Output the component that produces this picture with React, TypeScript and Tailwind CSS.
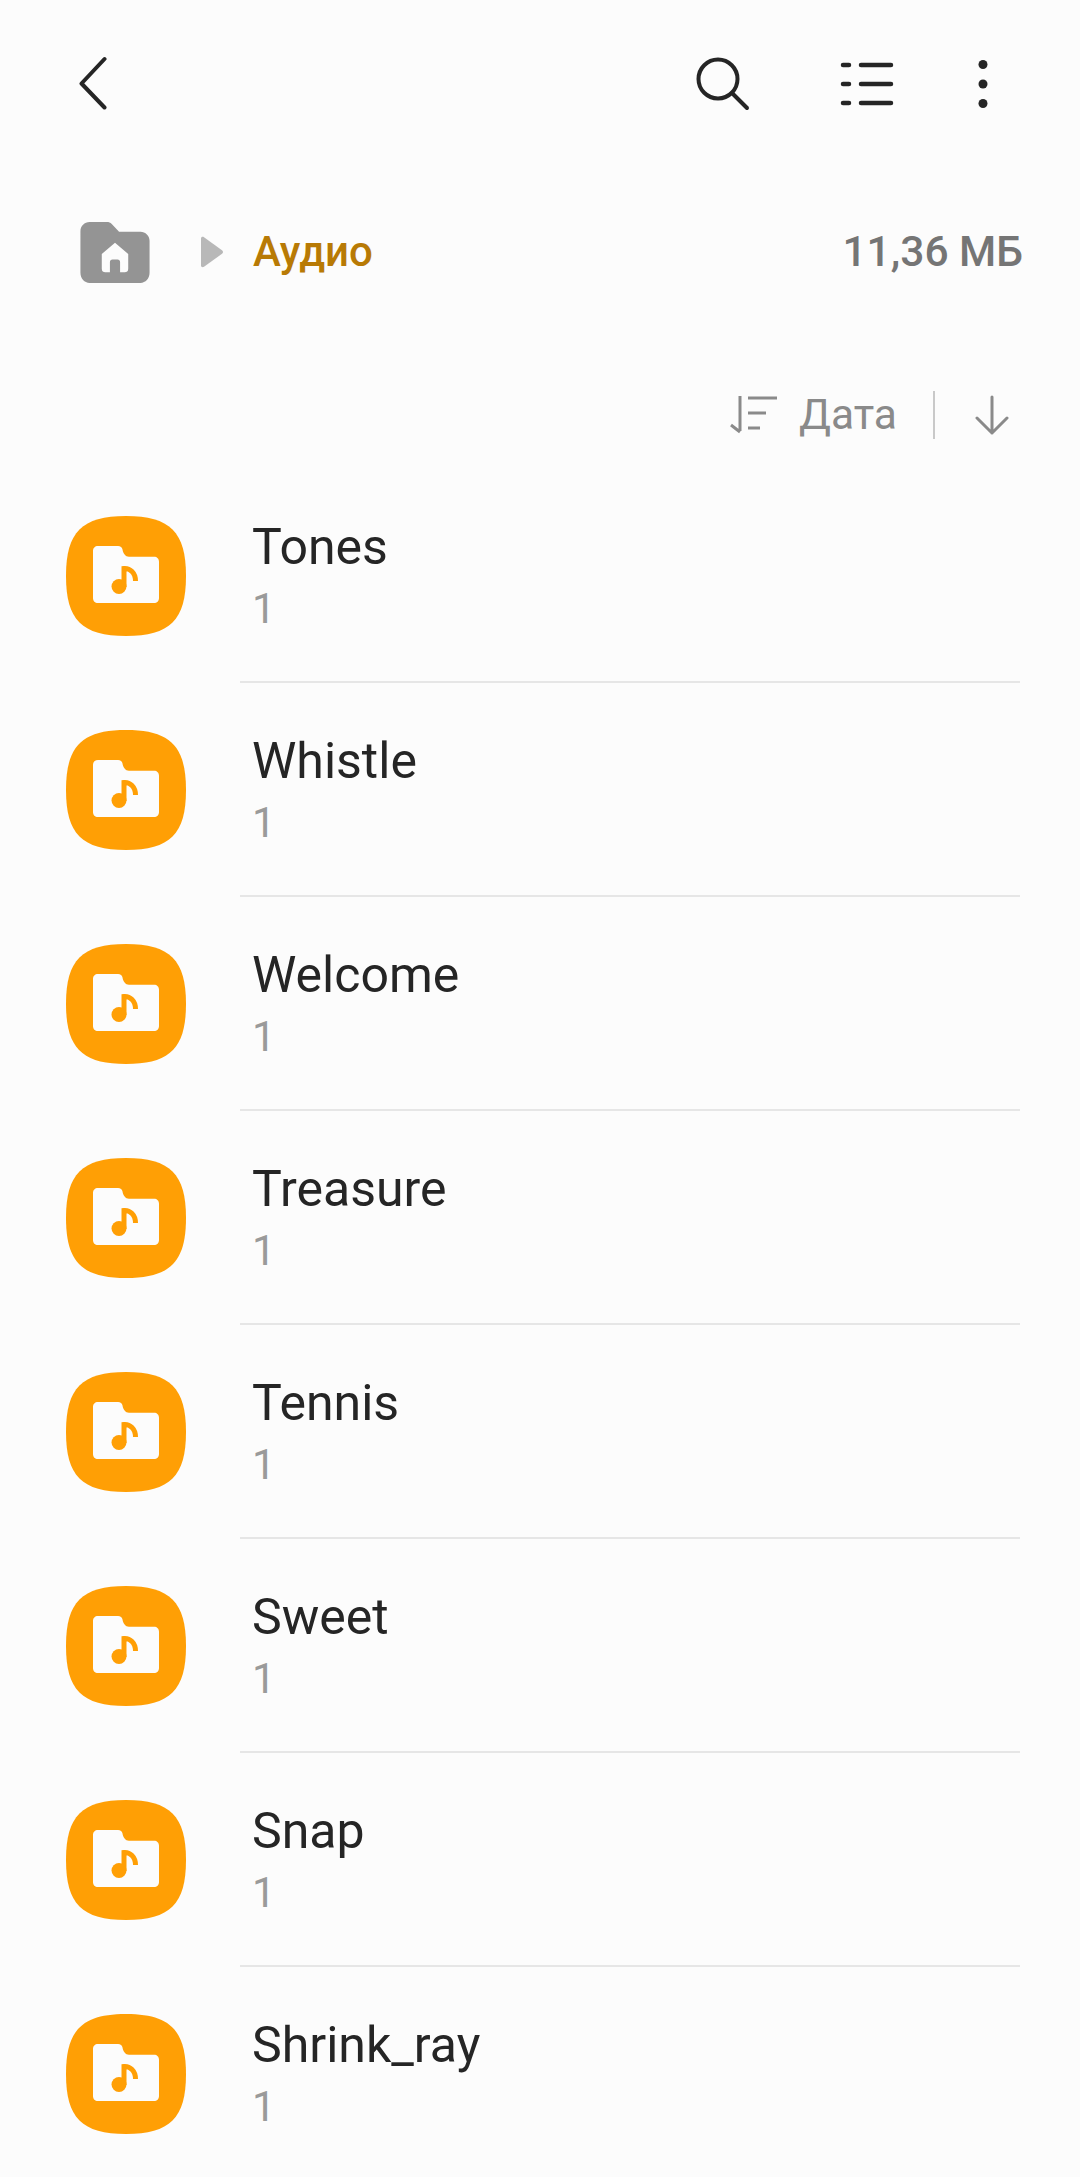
import type { ReactNode } from "react";

const folders = ["Tones", "Whistle", "Welcome", "Treasure", "Tennis", "Sweet", "Snap", "Shrink_ray"];

function IconSlot({ width, children }: { width: string; children: ReactNode }) {
  return <div className={`flex items-center justify-center ${width}`}>{children}</div>;
}

function TopBar() {
  return (
    <header className="flex h-[168px] items-center pl-[79px] pr-[89px]">
      <svg width="28" height="56" viewBox="0 0 28 56" fill="none" stroke="#252525" strokeWidth="4" strokeLinecap="round" strokeLinejoin="round">
        <path d="M25.500 3 2.500 27.500l23 24" />
      </svg>
      <div className="flex-1" />
      <svg width="54" height="54" viewBox="0 0 54 54" fill="none" stroke="#252525" strokeWidth="4" strokeLinecap="round" className="mr-[90px]">
        <circle cx="22" cy="22" r="19.500" />
        <path d="m36 36 15 15" />
      </svg>
      <svg width="54" height="44" viewBox="0 0 54 44" fill="none" stroke="#252525" strokeWidth="4.500" strokeLinecap="round" className="mr-[81px]">
        <path d="M3 3h6M3 22h6M3 41h6M21 3h30M21 22h30M21 41h30" />
      </svg>
      <svg width="16" height="48" viewBox="0 0 16 48" fill="#252525">
        <circle cx="8" cy="4.500" r="4.500" />
        <circle cx="8" cy="24" r="4.500" />
        <circle cx="8" cy="43.500" r="4.500" />
      </svg>
    </header>
  );
}

function Breadcrumb() {
  return (
    <div className="mt-[42px] flex h-[84px] items-center pl-[80px] pr-[57px]">
      <svg width="70" height="61" viewBox="0 0 68 60" className="shrink-0">
        <path d="M9 0h17c2 0 3.400.6 4.800 2L38 9.500h21c5 0 9 4 9 9V50c0 5.500-4 10-9 10H9c-5 0-9-4.500-9-10V9C0 4 4 0 9 0Z" fill="#949494" />
        <path d="M34 20.500 47 31.500V46c0 2.500-1.500 3.500-3.500 3.500H39V39.500c0-1.500-1-2.500-2.500-2.500h-5c-1.500 0-2.500 1-2.500 2.500v10h-4.500C22.500 49.500 21 48.500 21 46V31.500Z" fill="#fcfcfc" />
      </svg>
      <svg width="24" height="32" viewBox="0 0 24 32" className="ml-[50px] shrink-0">
        <path d="M1 2.500C1 1 2.500.4 4 1.200l18 13c1.300 1 1.300 2.600 0 3.600l-18 13C2.500 31.600 1 31 1 29.500Z" fill="#b8b8b8" />
      </svg>
      <span className="ml-[29px] text-[42px] font-medium leading-none text-[#b87a05]">Аудио</span>
      <span className="ml-auto text-[42.5px] font-medium leading-none text-[#757575]">11,36 МБ</span>
    </div>
  );
}

function SortBar() {
  return (
    <div className="mt-[89px] flex h-[64px] items-center justify-end pr-[70px]">
      <svg width="48" height="38" viewBox="0 0 48 38" fill="none" stroke="#8a8a8a" strokeWidth="3" className="mr-[21px]">
        <path d="M10 0v35M1 29l9 7" />
        <path d="M18 2h29M18 17h18M18 32h12" />
      </svg>
      <span className="text-[42.5px] leading-none text-[#8a8a8a]">Дата</span>
      <div className="ml-[36px] h-[48px] w-[2px] bg-[#c9c9c9]" />
      <IconSlot width="ml-[39px] w-[36px]">
        <svg width="34" height="40" viewBox="0 0 34 40" fill="none" stroke="#8a8a8a" strokeWidth="3" strokeLinecap="round" strokeLinejoin="round">
          <path d="M17 2v36M2 23l15 15 15-15" />
        </svg>
      </IconSlot>
    </div>
  );
}

function FolderRow({ name }: { name: string }) {
  return (
    <div className="flex h-[214px] pl-[66px] pr-[60px]">
      <div className="flex items-center pb-[1px]">
        <svg width="120" height="120" viewBox="0 0 120 120" className="shrink-0">
          <path d="M60 0C104 0 120 16 120 60S104 120 60 120 0 104 0 60 16 0 60 0Z" fill="#ff9f05" />
          <path d="M32 30h20c2.500 0 4 1.200 4.500 3.500.6 4 3 7.200 6.500 7.200h25c3 0 5 2 5 5V82c0 3-2 5-5 5H32c-3 0-5-2-5-5V35c0-3 2-5 5-5Z" fill="#fcfcfc" />
          <circle cx="53" cy="70.500" r="7.500" fill="#ff9f05" />
          <path d="M58 71V52.500c6-.5 11.500 4.500 11.500 12.500" fill="none" stroke="#ff9f05" strokeWidth="5" />
        </svg>
      </div>
      <div className="ml-[54px] flex flex-1 flex-col border-b-2 border-[#e6e6e6] pl-[12px]">
        <span className="mt-[51px] text-[50px] leading-[54px] text-[#252525]">{name}</span>
        <span className="mt-[10px] text-[42px] leading-[50px] text-[#9a9a9a]">1</span>
      </div>
    </div>
  );
}

export default function App() {
  return (
    <div className="h-[2177px] w-[1080px] overflow-hidden bg-[#fcfcfc] font-['Roboto',sans-serif]">
      <TopBar />
      <Breadcrumb />
      <SortBar />
      <div className="mt-[22px]">
        {folders.map((name) => (
          <FolderRow key={name} name={name} />
        ))}
      </div>
    </div>
  );
}
